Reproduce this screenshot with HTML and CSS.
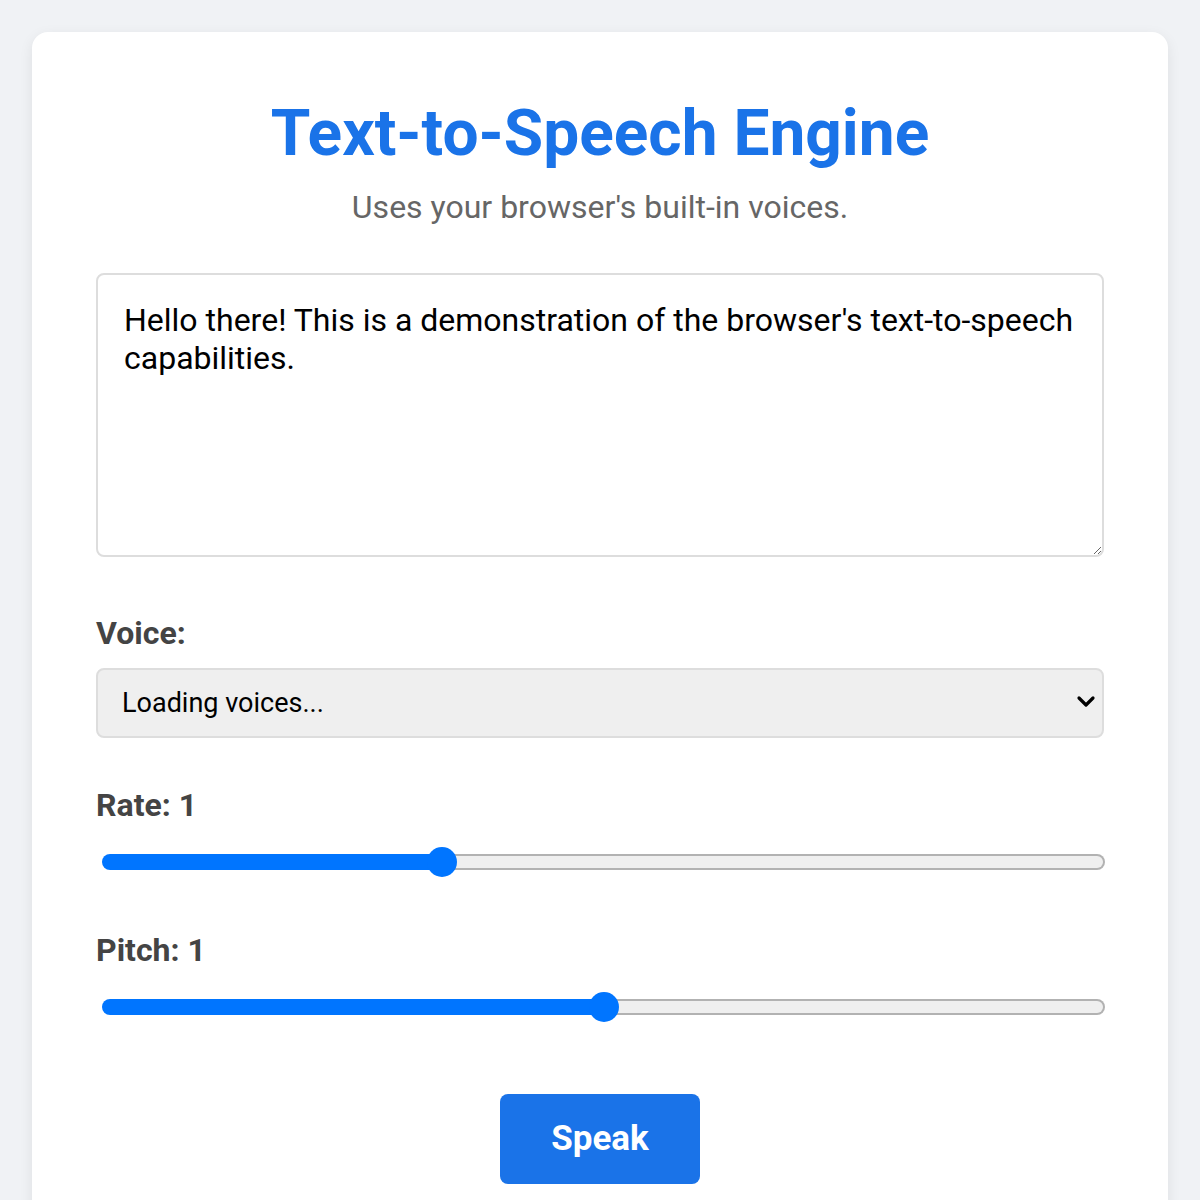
FILE: index.html
```html
<!DOCTYPE html>
<html lang="en">
<head>
  <meta charset="UTF-8" />
  <meta name="viewport" content="width=device-width, initial-scale=1.0" />
  <title>Text-to-Speech Engine</title>
  <link rel="stylesheet" href="styles.css">
</head>
<body>
  <div class="card">
    <h1>Text-to-Speech Engine</h1>
    <p class="subtitle">Uses your browser's built-in voices.</p>

    <textarea class="speech-text" id="text">Hello there! This is a demonstration of the browser's text-to-speech capabilities.</textarea>

    <div class="field">
      <label for="voice">Voice:</label>
      <div class="select-wrap">
        <select id="voice">
          <option>Loading voices...</option>
        </select>
        <svg class="chevron" width="20" height="14" viewBox="0 0 20 14">
          <path d="M3 3 L10 10 L17 3" fill="none" stroke="#000" stroke-width="3.2" stroke-linecap="round" stroke-linejoin="round"/>
        </svg>
      </div>
    </div>

    <div class="field">
      <label for="rate">Rate: <span id="rateValue">1</span></label>
      <input type="range" id="rate" min="0.5" max="2" step="0.1" value="1" style="--frac: 0.3333">
    </div>

    <div class="field">
      <label for="pitch">Pitch: <span id="pitchValue">1</span></label>
      <input type="range" id="pitch" min="0" max="2" step="0.1" value="1" style="--frac: 0.5">
    </div>

    <div class="actions">
      <button class="speak-btn" id="speak">Speak</button>
    </div>
  </div>
</body>
</html>
```

FILE: styles.css
```css
body {
  margin: 0;
  padding: 32px;
  background: #f0f2f5;
  font-family: Roboto, "Liberation Sans", sans-serif;
  color: #333;
}

.card {
  background: #fff;
  border-radius: 16px;
  box-shadow: 0 4px 14px rgba(0, 0, 0, 0.08);
  padding: 64px 64px 80px;
}

h1 {
  margin: 0 0 17px;
  font-size: 64px;
  font-weight: 700;
  color: #1a73e8;
  text-align: center;
}

.subtitle {
  margin: 0 0 47px;
  font-size: 32px;
  color: #666;
  text-align: center;
}

.speech-text {
  display: block;
  box-sizing: border-box;
  width: 100%;
  height: 284px;
  margin: 0 0 57px;
  padding: 26px;
  border: 2px solid #ddd;
  border-radius: 8px;
  font-family: Roboto, "Liberation Sans", sans-serif;
  font-size: 32px;
  color: #000;
  resize: vertical;
}

.field {
  margin-bottom: 48px;
}

.field label {
  display: block;
  margin-bottom: 16px;
  font-size: 32px;
  font-weight: 700;
  color: #444;
}

.select-wrap {
  position: relative;
}

.select-wrap select {
  display: block;
  box-sizing: border-box;
  width: 100%;
  height: 70px;
  padding: 0 24px;
  border: 2px solid #ddd;
  border-radius: 8px;
  background: #efefef;
  font-family: Roboto, "Liberation Sans", sans-serif;
  font-size: 27px;
  color: #000;
  -webkit-appearance: none;
  appearance: none;
}

.chevron {
  position: absolute;
  right: 8px;
  top: 27px;
  pointer-events: none;
}

input[type=range] {
  display: block;
  width: calc(100% - 5px);
  height: 30px;
  margin: 23px 0 54px 6px;
  background: transparent;
  -webkit-appearance: none;
  appearance: none;
}

input[type=range]::-webkit-slider-runnable-track {
  height: 16px;
  box-sizing: border-box;
  border: 2px solid transparent;
  border-radius: 8px;
  background:
    linear-gradient(to right, #0075ff calc(15px + (100% - 30px) * var(--frac)), #efefef 0) padding-box,
    linear-gradient(to right, #0075ff calc(15px + (100% - 30px) * var(--frac)), #b2b2b2 0) border-box;
}

input[type=range]::-webkit-slider-thumb {
  -webkit-appearance: none;
  width: 30px;
  height: 30px;
  margin-top: -9px;
  border-radius: 50%;
  background: #0075ff;
  border: none;
}

.actions {
  text-align: center;
  margin-top: 72px;
}

.speak-btn {
  padding: 24px 51px;
  border: none;
  border-radius: 8px;
  background: #1a73e8;
  color: #fff;
  font-family: Roboto, "Liberation Sans", sans-serif;
  font-size: 35px;
  font-weight: 700;
  line-height: 42px;
  cursor: pointer;
}
```
